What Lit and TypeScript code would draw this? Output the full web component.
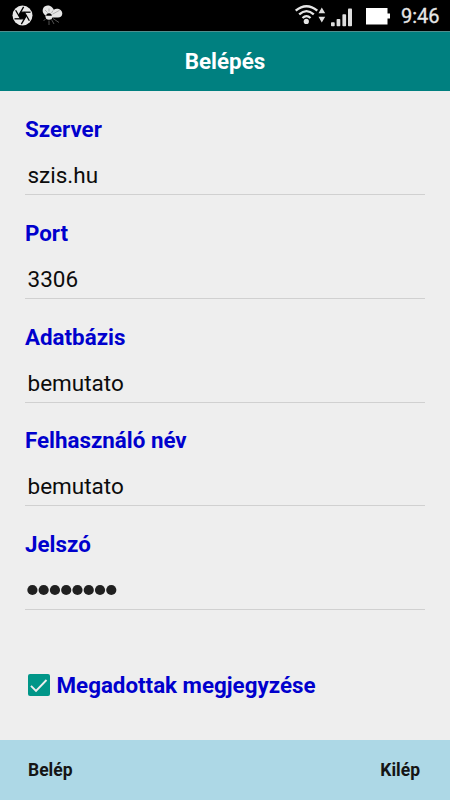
import { LitElement, html, css, svg } from "lit";
import { customElement, property } from "lit/decorators.js";

@customElement("status-bar")
class StatusBar extends LitElement {
  static styles = css`
    :host { display: flex; height: 31px; box-sizing: border-box; background: #000; color: #e6e6e6; }
    svg { display: block; flex: none; }
    .gap { flex: 1; }
    .time { width: 49px; font-size: 20px; line-height: 33px; height: 30px; -webkit-text-stroke: .3px #e6e6e6; }
  `;
  render() {
    const blades = [0, 60, 120, 180, 240, 300];
    return html`
      <svg width="110" height="30" viewBox="0 0 110 30">
        <circle cx="22.5" cy="15.5" r="10" fill="#e8e8e8" />
        <polygon points="20.6,12.2 24.4,12.2 26.3,15.5 24.4,18.8 20.6,18.8 18.7,15.5" fill="#000" />
        ${blades.map((a) => svg`<path d="M20.4 12.2L30.5 12.2" stroke="#000" stroke-width="1.3" transform=${`rotate(${a} 22.5 15.5)`} />`)}
        <path d="M46 15.5C43 14 42 11 43.2 8.2C44.6 5 49.5 4.6 52 7.2C53 8 53.4 9 53.8 9.8C57 7.5 62.3 9.5 62.3 13.5C62.3 16 60.5 17.4 58 17.4H52C51.5 14.5 47.5 13.5 46 15.5Z" fill="#e6e6e6" />
        <path d="M46 14.5Q49 11.5 52 14.5V17H46Z" fill="#e6e6e6" />
        <circle cx="49" cy="16.2" r="3.5" fill="#e6e6e6" />
        <path d="M46.2 15.8A2.8 2.6 0 0 1 51.8 15.8Z" fill="#000" />
        <path d="M45 10L47.5 12.5M49 8.5V11.5M53 10.5L51.5 13M59.5 10.3L52.5 14.2" stroke="#999" stroke-width=".7" />
        <path d="M45.5 19L43.5 21M49 20.5V25M51.5 19.5L54 24M53 18.5L59 22.5" stroke="#777" stroke-width=".7" />
      </svg>
      <span class="gap"></span>
      <svg width="121" height="30" viewBox="280 0 121 30">
        <g fill="none" stroke="#e6e6e6" stroke-width="2.3">
          <path d="M295.7 10.7Q306.5 1.8 317.3 10.7" />
          <path d="M299.2 14.4Q306.5 7.8 313.8 14.4" />
          <path d="M302.5 18Q306.5 14.2 310.5 18" />
        </g>
        <circle cx="306.3" cy="21.4" r="2.6" fill="#e6e6e6" />
        <path d="M318.5 13.2L321.8 7.4L325.2 13.2ZM318.5 16.8L321.8 22.6L325.2 16.8Z" fill="#dedede" />
        <g fill="#dedede">
          <rect x="331" y="22.3" width="3.7" height="4" rx=".8" />
          <rect x="336.6" y="19" width="3.7" height="7.3" rx=".8" />
          <rect x="342.4" y="14.2" width="3.7" height="12.1" rx=".8" />
          <rect x="348" y="8.6" width="4" height="17.7" rx=".8" />
        </g>
        <path d="M366 8H387.5V13.5H390V18.5H387.5V24.5H366Z" fill="#fff" />
      </svg>
      <span class="time">9:46</span>`;
  }
}

@customElement("form-field")
class FormField extends LitElement {
  @property() label = "";
  @property() value = "";
  @property({ type: Number }) dots = 0;
  static styles = css`
    :host { display: block; height: 103.75px; box-sizing: border-box; }
    .label { color: #0000cd; font-weight: 700; font-size: 22.35px; line-height: 30px; padding: 22px 0 1px; white-space: nowrap; }
    .value { display: flex; align-items: center; height: 50px; box-sizing: border-box; border-bottom: 1px solid #d0d0d0; padding: 11px 0 0 2.5px; font-size: 22.5px; color: #0c0c0c; }
    svg { display: block; margin: -1px 0 0 -.5px; }
  `;
  render() {
    return html`<div class="label">${this.label}</div>
      <div class="value">${this.dots
        ? html`<svg width="90" height="12" viewBox="0 0 90 12">${Array.from({ length: this.dots }, (_, i) =>
            svg`<circle cx=${5.4 + i * 11.27} cy="6" r="5.1" fill="#202020" />`)}</svg>`
        : this.value}</div>`;
  }
}

@customElement("app-root")
class AppRoot extends LitElement {
  static styles = css`
    :host { display: flex; flex-direction: column; width: 450px; height: 800px; background: #eee; font-family: Roboto, "Liberation Sans", sans-serif; overflow: hidden; }
    header { height: 60px; flex: none; box-sizing: border-box; border-top: 1px solid #4f8f8f; background: #008080; color: #fff; font-weight: 700; font-size: 22.35px; line-height: 59px; text-align: center; }
    main { flex: 1; padding: 1px 25px 0; }
    .remember { display: flex; align-items: center; gap: 6.5px; margin: 59.5px 0 0 3px; height: 30px; color: #0000cd; font-weight: 700; font-size: 22.35px; white-space: nowrap; }
    .remember svg { display: block; flex: none; }
    footer { height: 60px; flex: none; box-sizing: border-box; display: flex; justify-content: space-between; align-items: center; padding: 0 30px 0 28px; background: #add8e6; color: #151515; font-weight: 700; font-size: 17.5px; }
  `;
  render() {
    return html`
      <status-bar></status-bar>
      <header>Belépés</header>
      <main>
        <form-field label="Szerver" value="szis.hu"></form-field>
        <form-field label="Port" value="3306"></form-field>
        <form-field label="Adatbázis" value="bemutato"></form-field>
        <form-field label="Felhasználó név" value="bemutato"></form-field>
        <form-field label="Jelszó" .dots=${8}></form-field>
        <div class="remember">
          <svg width="22" height="22" viewBox="0 0 22 22">
            <rect width="22" height="22" rx="2" fill="#009688" />
            <path d="M3 11.8L8 16.8L18.5 6" fill="none" stroke="#eee" stroke-width="1.9" />
          </svg>
          <span>Megadottak megjegyzése</span>
        </div>
      </main>
      <footer><span>Belép</span><span>Kilép</span></footer>`;
  }
}
